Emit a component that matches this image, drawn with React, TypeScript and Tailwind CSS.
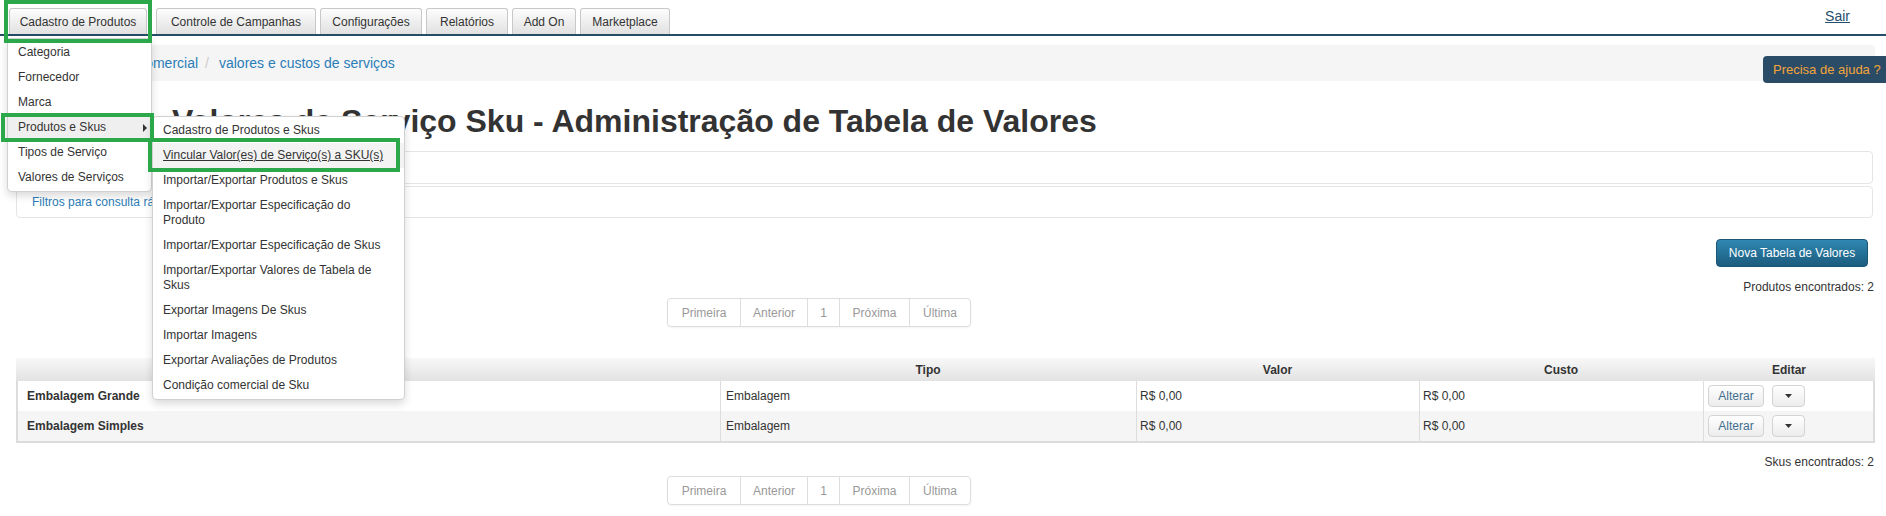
import React from "react";

const tabs = [
  { label: "Cadastro de Produtos", w: "w-[138px]" },
  { label: "Controle de Campanhas", w: "w-[160px] ml-[5px]" },
  { label: "Configurações", w: "w-[102px]" },
  { label: "Relatórios", w: "w-[82px]" },
  { label: "Add On", w: "w-[64px]" },
  { label: "Marketplace", w: "w-[90px]" },
];

const menuItems = ["Categoria", "Fornecedor", "Marca", "Produtos e Skus", "Tipos de Serviço", "Valores de Serviços"];

const subItems: string[][] = [
  ["Cadastro de Produtos e Skus"],
  ["Vincular Valor(es) de Serviço(s) a SKU(s)"],
  ["Importar/Exportar Produtos e Skus"],
  ["Importar/Exportar Especificação do", "Produto"],
  ["Importar/Exportar Especificação de Skus"],
  ["Importar/Exportar Valores de Tabela de", "Skus"],
  ["Exportar Imagens De Skus"],
  ["Importar Imagens"],
  ["Exportar Avaliações de Produtos"],
  ["Condição comercial de Sku"],
];

const rows = [
  { nome: "Embalagem Grande", tipo: "Embalagem", valor: "R$ 0,00", custo: "R$ 0,00" },
  { nome: "Embalagem Simples", tipo: "Embalagem", valor: "R$ 0,00", custo: "R$ 0,00" },
];

const pages = [
  { label: "Primeira", w: "w-[72px]" },
  { label: "Anterior", w: "w-[67px] border-l" },
  { label: "1", w: "w-[32px] border-l" },
  { label: "Próxima", w: "w-[70px] border-l" },
  { label: "Última", w: "w-[61px] border-l" },
];

const Pagination = () => (
  <div className="ml-[651px] flex h-[29px] w-fit rounded-[4px] border border-[#ddd] shadow-[0_1px_2px_rgba(0,0,0,0.05)] text-[#999]">
    {pages.map((p) => (
      <span key={p.label} className={`flex items-center justify-center border-[#ddd] leading-[20px] ${p.w}`}>
        {p.label}
      </span>
    ))}
  </div>
);

const GreenBox = ({ className }: { className: string }) => (
  <div className={`absolute border-4 border-[#2aa84a] ${className}`} />
);

export default function App() {
  return (
    <div className="relative h-[516px] w-[1886px] overflow-hidden bg-white font-['Liberation_Sans',Arial,sans-serif] text-[12px] text-[#333]">
      {/* top navigation */}
      <div className="flex h-[36px] justify-between border-b-2 border-[#264d66]">
        <div className="flex items-end gap-[4px] pl-[9px]">
          {tabs.map((t) => (
            <div
              key={t.label}
              className={`flex h-[26px] items-center justify-center rounded-t-[3px] border border-b-0 border-[#c8c8c8] bg-linear-to-b from-[#fdfdfd] to-[#e1e1e1] ${t.w}`}
            >
              {t.label}
            </div>
          ))}
        </div>
        <a className="mr-[36px] mt-[8px] self-start text-[14px] leading-[16px] text-[#264d6b] underline">Sair</a>
      </div>

      <div className="ml-[16px] w-[1859px]">
        {/* breadcrumb */}
        <div className="mt-[9px] flex h-[36px] items-center rounded-[4px] bg-[#f5f5f5] pl-[56px] text-[14px]">
          <a className="text-[#2b7db8]">Condição Comercial</a>
          <span className="ml-[7px] mr-[10px] text-[#ccc]">/</span>
          <a className="text-[#2b7db8]">valores e custos de serviços</a>
        </div>

        <h1 className="mt-[20px] pl-[156px] text-[32px] font-bold leading-[40px] text-[#333]">
          Valores de Serviço Sku - Administração de Tabela de Valores
        </h1>

        {/* accordions */}
        <div className="mt-[10px] h-[33px] w-[1857px] rounded-[4px] border border-[#e5e5e5]" />
        <div className="mt-[2px] flex h-[32px] w-[1857px] items-center rounded-[4px] border border-[#e5e5e5] pl-[15px]">
          <a className="text-[#2b7db8]">Filtros para consulta rápida</a>
        </div>

        <div className="mt-[21px] flex justify-end pr-[7px]">
          <button className="h-[28px] w-[152px] rounded-[4px] border border-[#1a5575] bg-linear-to-b from-[#3088b2] to-[#1b5c7e] text-[12px] text-white">
            Nova Tabela de Valores
          </button>
        </div>
        <div className="mt-[11px] pr-[1px] text-right leading-[18px]">Produtos encontrados: 2</div>
        <div className="mt-[2px]">
          <Pagination />
        </div>

        {/* table */}
        <div className="mt-[31px]">
          <div className="grid h-[23px] grid-cols-[704px_416px_283px_284px_172px] items-center bg-linear-to-b from-[#f8f8f8] to-[#e2e2e2] text-center font-bold">
            <span>Nome</span>
            <span>Tipo</span>
            <span>Valor</span>
            <span>Custo</span>
            <span>Editar</span>
          </div>
          <div className="border-x-2 border-b-2 border-[#dcdcdc]">
            {rows.map((r, i) => (
              <div
                key={r.nome}
                className={`grid h-[30px] grid-cols-[702px_416px_283px_284px_170px] ${i % 2 ? "bg-[#f5f5f5]" : "bg-white"}`}
              >
                <span className="flex items-center pl-[9px] font-bold">{r.nome}</span>
                <span className="flex items-center border-l border-[#ddd] pl-[5px]">{r.tipo}</span>
                <span className="flex items-center border-l border-[#ddd] pl-[3px]">{r.valor}</span>
                <span className="flex items-center border-l border-[#ddd] pl-[3px]">{r.custo}</span>
                <span className="flex items-center gap-[8px] border-l border-[#ddd] pl-[4px]">
                  <button className="h-[22px] w-[56px] rounded-[4px] border border-[#d3d3d3] bg-linear-to-b from-white to-[#ececec] text-[#3f6f8e]">
                    Alterar
                  </button>
                  <button className="flex h-[22px] w-[33px] items-center justify-center rounded-[4px] border border-[#d3d3d3] bg-linear-to-b from-white to-[#ececec]">
                    <svg width="7" height="4" viewBox="0 0 7 4">
                      <polygon points="0,0 7,0 3.5,4" fill="#333" />
                    </svg>
                  </button>
                </span>
              </div>
            ))}
          </div>
        </div>

        <div className="mt-[10px] pr-[1px] text-right leading-[18px]">Skus encontrados: 2</div>
        <div className="mt-[5px]">
          <Pagination />
        </div>
      </div>

      {/* help tab */}
      <div className="absolute left-[1763px] top-[56px] h-[27px] whitespace-nowrap rounded-[4px] bg-[#2b4c67] px-[10px] text-[13px] leading-[27px] text-[#f2a43a]">
        Precisa de ajuda ?
      </div>

      {/* dropdown menu */}
      <div className="absolute left-[7px] top-[38px] w-[145px] rounded-b-[5px] border border-[rgba(0,0,0,0.18)] bg-white py-[1px] shadow-[0_4px_8px_rgba(0,0,0,0.15)]">
        {menuItems.map((m) => (
          <div
            key={m}
            className={`flex h-[25px] items-center pl-[10px] leading-[15px] ${m === "Produtos e Skus" ? "bg-[#efefef]" : ""}`}
          >
            {m}
            {m === "Produtos e Skus" && (
              <svg className="ml-auto mr-[4px]" width="4" height="8" viewBox="0 0 4 8">
                <polygon points="0,0 4,4 0,8" fill="#333" />
              </svg>
            )}
          </div>
        ))}
      </div>

      {/* submenu */}
      <div className="absolute left-[152px] top-[116px] w-[253px] rounded-[5px] border border-[rgba(0,0,0,0.18)] bg-white py-[1px] shadow-[0_4px_8px_rgba(0,0,0,0.15)]">
        {subItems.map((lines, i) => (
          <div
            key={lines[0]}
            className={`whitespace-nowrap py-[5px] pl-[10px] leading-[15px] ${i === 1 ? "bg-[#f3f3f3] underline" : ""}`}
          >
            {lines.map((l) => (
              <div key={l}>{l}</div>
            ))}
          </div>
        ))}
      </div>

      {/* highlight boxes */}
      <GreenBox className="left-[4px] top-0 h-[43px] w-[148px]" />
      <GreenBox className="left-[1px] top-[113px] h-[29px] w-[153px]" />
      <GreenBox className="left-[148px] top-[138px] h-[34px] w-[252px]" />
    </div>
  );
}
